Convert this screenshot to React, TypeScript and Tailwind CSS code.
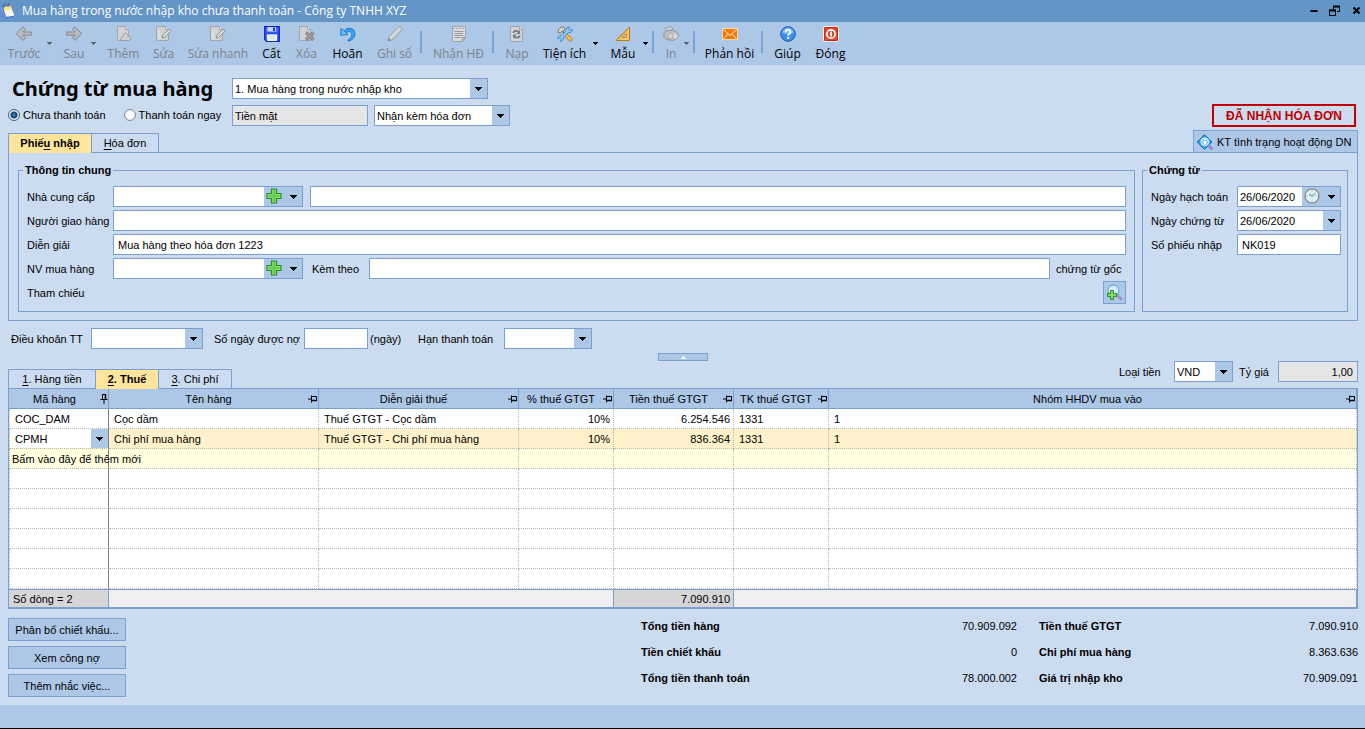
import type { ReactNode } from "react";

const border = "border-[#7a9fd0]";

function Caret({ dim = false }: { dim?: boolean }) {
  return (
    <svg width="7" height="4" viewBox="0 0 7 4" className="shrink-0" aria-hidden="true">
      <path d="M0 0h7v1H6v1H5v1H4v1H3V3H2V2H1V1H0z" fill={dim ? "#555b66" : "#000"} />
    </svg>
  );
}

function SmallCaret({ dim = false }: { dim?: boolean }) {
  return (
    <svg width="5" height="3" viewBox="0 0 5 3" className="shrink-0" aria-hidden="true">
      <path d="M0 0h5v1H4v1H3v1H2V2H1V1H0z" fill={dim ? "#5d636c" : "#000"} />
    </svg>
  );
}

function Svg({ children }: { children: ReactNode }) {
  return (
    <svg width="16" height="16" viewBox="0 0 16 16" className="shrink-0" aria-hidden="true">
      {children}
    </svg>
  );
}

const icons: Record<string, ReactNode> = {
  back: (
    <Svg>
      <path d="M7 .8 9.500 3.200 6.700 6h8.600v3.200H6.700l2.800 2.600L7 14.400.500 7.600z" fill="#b9bbbd" stroke="#85888c" strokeLinejoin="round" />
    </Svg>
  ),
  forward: (
    <Svg>
      <path d="M9 .8 6.500 3.200 9.300 6H.7v3.200h8.600l-2.800 2.600L9 14.400l6.500-6.800z" fill="#b9bbbd" stroke="#85888c" strokeLinejoin="round" />
    </Svg>
  ),
  add: (
    <Svg>
      <path d="M1.500.5h8l3 3v11h-11z" fill="#d0d2d4" stroke="#a3a6aa" />
      <path d="M9.500.5v3h3" fill="#ececec" stroke="#a3a6aa" />
      <path d="M5 13.500c-.5-2 1-3 2.500-3.200C7 8 9 7 10.500 7.600 12 8 12 9.500 11.800 10.200c1.700-.2 3 .8 2.900 2.300-.2 1.500-1.200 2-2.200 2H7c-1 0-1.700-.3-2-1z" fill="#cfcfcf" stroke="#989a9d" />
    </Svg>
  ),
  edit: (
    <Svg>
      <path d="M.5.5h9l3 3v11H.5z" fill="#d0d2d4" stroke="#a3a6aa" />
      <path d="M9.500.5v3h3" fill="#ececec" stroke="#a3a6aa" />
      <path d="M3 4v8M3 12h3" fill="none" stroke="#e9eaeb" />
      <path d="m6 12 .8-2.700 6.400-6.300 2 2-6.500 6.300z" fill="#dcdcdc" stroke="#8b8e93" />
    </Svg>
  ),
  save: (
    <Svg>
      <path d="M.8.8h14.400v14.400H2.500L.8 13.500z" fill="#4d70f3" stroke="#0b2bd8" strokeWidth="1.500" />
      <rect x="3.500" y="1" width="8.500" height="4.500" fill="#c9d6fb" />
      <rect x="9" y="1.500" width="2" height="3.500" fill="#1638df" />
      <path d="M2 7h12" stroke="#1c3fe0" />
      <rect x="3" y="8.500" width="10" height="6.500" fill="#f3f5fb" />
      <path d="M4.500 10.500h7M4.500 12.500h7" stroke="#cdd4e4" />
    </Svg>
  ),
  remove: (
    <Svg>
      <path d="M.5.5h8l3 3v11H.5z" fill="#d0d2d4" stroke="#a3a6aa" />
      <path d="M8.500.5v3h3" fill="#ececec" stroke="#a3a6aa" />
      <path d="m7 6.500 7.500 7.500M14.500 6.500 7 14" stroke="#7e8185" strokeWidth="3.400" />
      <path d="m7.300 6.800 6.900 6.900M14.200 6.800l-6.900 6.900" stroke="#a9abae" strokeWidth="1.200" />
    </Svg>
  ),
  undo: (
    <Svg>
      <path d="M4 5.200C7 .8 14.800 1.500 15 7.500c.1 4-3 6.700-6.500 7.700l-.7-1.200c2.500-1.400 4-3.300 4-5.500 0-3.400-3.300-4-5.300-1.600z" fill="#3ba2f0" stroke="#1b7bd0" strokeLinejoin="round" />
      <path d="M1 2.500.7 9.200 8 8.500 6.200 6.800l-2-2z" fill="#6fc0f8" stroke="#1b7bd0" strokeLinejoin="round" />
    </Svg>
  ),
  pen: (
    <Svg>
      <path d="m1 15 1-4.500L11.500 1c1-.8 2.200-.3 2.800.4.700.7 1 1.800.2 2.700L5.200 13.800z" fill="#cfd0d1" stroke="#9a9da1" />
      <path d="m4 11.500 8-8.200" stroke="#e9e9e9" />
      <path d="m1 15 .8-2.500L3.500 14z" fill="#777" />
    </Svg>
  ),
  invoice: (
    <Svg>
      <path d="M1.500.5h13v11l-3.500 4H1.500z" fill="#dcdddf" stroke="#9da0a5" />
      <path d="M2 2.500h12" stroke="#9da0a5" strokeDasharray="2 1" />
      <path d="M3.500 5.500h9M3.500 7.500h9M3.500 9.500h9M3.500 11.500h6" stroke="#96999e" />
      <path d="M11 15.500v-4h3.500z" fill="#b9bbbe" stroke="#9da0a5" />
    </Svg>
  ),
  reload: (
    <Svg>
      <path d="M1.500.5h9l3 3v12h-12z" fill="#d4d5d7" stroke="#a0a3a8" />
      <path d="M10.500.5v3h3" fill="#f0f0f0" stroke="#a0a3a8" />
      <path d="M4.500 7c0-2.500 4-3 5.300-.8M10.500 9.500c0 2.500-4 3-5.300.8" fill="none" stroke="#777a80" strokeWidth="1.800" />
      <path d="M11 4v4H7.300zM4 12.500v-4h3.700z" fill="#777a80" />
    </Svg>
  ),
  tools: (
    <Svg>
      <path d="m8.500 8.500 5 5.200" stroke="#b9771a" strokeWidth="3.800" strokeLinecap="round" />
      <path d="m8.500 8.500 5 5.200" stroke="#fbc352" strokeWidth="2.200" strokeLinecap="round" />
      <path d="m5 5 4 4" stroke="#77706a" strokeWidth="1.600" />
      <path d="M1 6.300C1 3 3 .8 6.500.8l1.300 1.600-.6 2.200-1.700.3-2 2z" fill="#d8d4cf" stroke="#6f6a66" strokeWidth=".9" />
      <path d="M15.200 3 13 4.700 11.500 3.300 13 1c-2.500-.5-4.300 1.300-3.700 3.700L4.700 9.500C2.500 9 .6 10.500.8 13L3 11.500l1.500 1.400L3 15.200c2.500.3 4-1.500 3.600-3.700l4.700-4.800C13.700 7.200 15.700 5.500 15.200 3z" fill="#8ccbf6" stroke="#3a8cd0" strokeWidth=".9" strokeLinejoin="round" />
    </Svg>
  ),
  ruler: (
    <Svg>
      <path d="M14.500 1v13.500H1z" fill="#f7c765" stroke="#b97a22" strokeLinejoin="round" />
      <path d="M11.300 7.500v4H7.300z" fill="#c9d6e4" stroke="#b97a22" strokeWidth=".9" />
      <path d="m3.500 12.200.8.8M5.500 10.200l.8.800M7.500 8.200l.8.800M9.500 6.200l.8.800M11.500 4.200l.8.800" stroke="#8d5a06" strokeWidth=".8" />
    </Svg>
  ),
  print: (
    <Svg>
      <path d="M2.500 4.500 2 2l5.500-1.500L9.500 2 9 5H4z" fill="#cbcccd" stroke="#9b9ea3" />
      <path d="M.8 7.500 3.500 5l6-.8 5 2.300 1 2.500-1 3-4.500 2.500-6-1L.8 11z" fill="#bfc1c3" stroke="#909398" strokeLinejoin="round" />
      <circle cx="7.500" cy="10" r="2.800" fill="#d4d5d6" stroke="#9a9da1" strokeWidth=".8" />
      <path d="m10 8 4.500 1v2.500l-3 1.800z" fill="#d9dadb" />
    </Svg>
  ),
  mail: (
    <Svg>
      <rect x=".5" y="2.500" width="15" height="11" fill="#f5780a" stroke="#ffd9b0" />
      <path d="m1.500 3.500 6.500 6 6.500-6M1.500 12.800 6 8.200M14.500 12.800 10 8.200" fill="none" stroke="#fff0dd" />
    </Svg>
  ),
  help: (
    <Svg>
      <circle cx="8" cy="8" r="7.300" fill="#3d8ff0" stroke="#155dbd" />
      <path d="M2.500 7a5.500 5.500 0 0 1 11 0c-3 1.800-8 1.800-11 0z" fill="#7db9fa" />
      <path d="M5.700 6.200c0-3 4.800-3 4.800-.2 0 1.700-2.400 1.900-2.400 3.800" fill="none" stroke="#fff" strokeWidth="1.700" />
      <rect x="7.100" y="11" width="2" height="2" fill="#fff" />
    </Svg>
  ),
  close: (
    <Svg>
      <rect x=".5" y=".5" width="15" height="15" rx="1.500" fill="#e2492c" stroke="#fff1ea" />
      <rect x="1.500" y="1.500" width="13" height="13" rx="1" fill="none" stroke="#c03018" />
      <circle cx="8" cy="8" r="4.200" fill="none" stroke="#fff" strokeWidth="1.700" />
      <path d="M8 5.500v5" stroke="#fff" strokeWidth="1.700" />
    </Svg>
  ),
};

type Tool =
  | { kind: "button"; label: string; icon: string; w: string; off?: boolean }
  | { kind: "menu"; label: string; w: string; off?: boolean }
  | { kind: "line" };

const tools: Tool[] = [
  { kind: "button", label: "Trước", icon: "back", w: "w-[46px]", off: true },
  { kind: "menu", label: "Danh sách trước", w: "w-[10px]", off: true },
  { kind: "button", label: "Sau", icon: "forward", w: "w-[34px]", off: true },
  { kind: "menu", label: "Danh sách sau", w: "w-[10px]", off: true },
  { kind: "button", label: "Thêm", icon: "add", w: "w-[45px]", off: true },
  { kind: "button", label: "Sửa", icon: "edit", w: "w-[35px]", off: true },
  { kind: "button", label: "Sửa nhanh", icon: "edit", w: "w-[74px]", off: true },
  { kind: "button", label: "Cất", icon: "save", w: "w-[33px]" },
  { kind: "button", label: "Xóa", icon: "remove", w: "w-[37px]", off: true },
  { kind: "button", label: "Hoãn", icon: "undo", w: "w-[45px]" },
  { kind: "button", label: "Ghi sổ", icon: "pen", w: "w-[49px]", off: true },
  { kind: "line" },
  { kind: "button", label: "Nhận HĐ", icon: "invoice", w: "w-[65px]", off: true },
  { kind: "line" },
  { kind: "button", label: "Nạp", icon: "reload", w: "w-[38px]", off: true },
  { kind: "button", label: "Tiện ích", icon: "tools", w: "w-[57px]" },
  { kind: "menu", label: "Các tiện ích", w: "w-[10px]" },
  { kind: "button", label: "Mẫu", icon: "ruler", w: "w-[40px]" },
  { kind: "menu", label: "Các mẫu", w: "w-[8px]" },
  { kind: "line" },
  { kind: "button", label: "In", icon: "print", w: "w-[26px]", off: true },
  { kind: "menu", label: "Mẫu in", w: "w-[8px]", off: true },
  { kind: "line" },
  { kind: "button", label: "Phản hồi", icon: "mail", w: "w-[61px]" },
  { kind: "line" },
  { kind: "button", label: "Giúp", icon: "help", w: "w-[41px]" },
  { kind: "button", label: "Đóng", icon: "close", w: "w-[45px]" },
];

function Toolbar() {
  return (
    <nav className="flex h-[43px] items-start bg-[#adc7e6] pl-px pt-1 font-['Open_Sans',sans-serif] text-xs">
      {tools.map((t, i) => {
        if (t.kind === "line") {
          return (
            <span key={i} className="mt-[5px] flex h-[22px] w-[7px] shrink-0 pl-px">
              <span className="w-0.5 bg-[#74a3d8]" />
            </span>
          );
        }
        if (t.kind === "menu") {
          return (
            <button key={i} type="button" aria-label={t.label} disabled={t.off} className={`${t.w} mt-4 shrink-0`}>
              <SmallCaret dim={t.off} />
            </button>
          );
        }
        return (
          <button
            key={i}
            type="button"
            disabled={t.off}
            className={`${t.w} flex shrink-0 flex-col items-center gap-1 whitespace-nowrap leading-4 ${t.off ? "text-[#7c828b]" : "text-black"}`}
          >
            {icons[t.icon]}
            <span>{t.label}</span>
          </button>
        );
      })}
    </nav>
  );
}

function Dropdown({ id, value, w, label }: { id: string; value: string; w: string; label?: string }) {
  return (
    <div className={`relative h-[21px] shrink-0 border bg-white ${border} ${w}`}>
      <select id={id} aria-label={label} className="h-full w-full appearance-none bg-transparent pl-0.5 pr-5 outline-none">
        <option>{value}</option>
      </select>
      <span className="pointer-events-none absolute inset-y-0 right-0 flex w-[17px] items-center justify-center bg-[#adc7e6]">
        <Caret />
      </span>
    </div>
  );
}

function PlusIcon() {
  return (
    <svg width="16" height="16" viewBox="0 0 16 16" aria-hidden="true">
      <path d="M5.500 1h5v4.500H15v5h-4.500V15h-5v-4.500H1v-5h4.500z" fill="#8cdb6c" stroke="#259028" strokeWidth="1.200" />
      <path d="M8 2.500v11M2.500 8h11" stroke="#5cc54a" strokeWidth="1.500" />
    </svg>
  );
}

function ClockIcon() {
  return (
    <svg width="16" height="16" viewBox="0 0 16 16" aria-hidden="true">
      <circle cx="8" cy="8" r="7" fill="#d6eef5" stroke="#8d9396" strokeWidth="1.500" />
      <circle cx="8" cy="8" r="5.500" fill="none" stroke="#fff" />
      <path d="m5 6 3 2.300L11.500 5" fill="none" stroke="#5d8390" />
      <path d="M8 2.500v1M8 12.500v1M2.500 8h1M12.500 8h1" stroke="#6c8088" />
    </svg>
  );
}

function ComboBox({ id, value = "", icon, action, grow = "w-[190px]" }: { id: string; value?: string; icon: ReactNode; action: string; grow?: string }) {
  return (
    <div className={`flex h-[21px] shrink-0 border bg-white ${border} ${grow}`}>
      <input id={id} defaultValue={value} className="w-0 min-w-0 flex-1 px-0.5 outline-none" />
      <div className="flex w-[38px] shrink-0 items-center bg-[#adc7e6] pl-0.5">
        <button type="button" aria-label={action} className="w-[18px] pb-0.5">
          {icon}
        </button>
        <button type="button" aria-label={`Mở danh sách ${action}`} className="flex h-full flex-1 items-center justify-center">
          <Caret />
        </button>
      </div>
    </div>
  );
}

function TextBox({ id, value = "", label, className = "" }: { id: string; value?: string; label?: string; className?: string }) {
  return (
    <input
      id={id}
      aria-label={label}
      defaultValue={value}
      className={`h-[21px] min-w-0 border px-1 outline-none ${border} ${className}`}
    />
  );
}

function Radio({ id, label, checked = false }: { id: string; label: string; checked?: boolean }) {
  return (
    <label htmlFor={id} className="flex items-center gap-[3px] whitespace-nowrap">
      <input
        id={id}
        type="radio"
        name="payment"
        defaultChecked={checked}
        className="h-3 w-3 appearance-none rounded-full border border-[#8a9099] bg-[radial-gradient(circle,#ffffff_30%,#d5d9de_100%)] checked:border-[#3f5f80] checked:bg-[radial-gradient(circle,#2c8ccc_0px,#123f68_3px,#e8eef4_4px)]"
      />
      {label}
    </label>
  );
}

function Tab({ k, pre = "", post, w, active = false, last = false }: { k: string; pre?: string; post: string; w: string; active?: boolean; last?: boolean }) {
  return (
    <button
      type="button"
      role="tab"
      aria-selected={active}
      className={`border-l border-t ${border} ${w} ${last ? "border-r" : ""} ${active ? "-mb-px h-5 bg-[#ffe49b] pb-px font-bold" : "h-[19px]"} relative whitespace-nowrap leading-[18px]`}
    >
      {pre}
      <span className="underline underline-offset-2">{k}</span>
      {post}
    </button>
  );
}

function Pin({ up = false }: { up?: boolean }) {
  return up ? (
    <svg width="8" height="10" viewBox="0 0 8 10" className="shrink-0" aria-hidden="true">
      <path d="M2.500 5.500v-5h3v5M.5 5.500h7M4 5.500V10" fill="none" stroke="#000" />
      <path d="M5.500 0v5" stroke="#000" strokeWidth="1.500" />
    </svg>
  ) : (
    <svg width="10" height="8" viewBox="0 0 10 8" className="shrink-0" aria-hidden="true">
      <path d="M3.500.5v7M0 4h3.500M3.500 1.500h5v4h-5" fill="none" stroke="#000" />
      <path d="M4 5.500h5" stroke="#000" strokeWidth="1.500" />
    </svg>
  );
}

const columns = [
  { name: "Mã hàng", w: "w-[100px]" },
  { name: "Tên hàng", w: "w-[210px]" },
  { name: "Diễn giải thuế", w: "w-[200px]" },
  { name: "% thuế GTGT", w: "w-[95px]" },
  { name: "Tiền thuế GTGT", w: "w-[120px]" },
  { name: "TK thuế GTGT", w: "w-[95px]" },
  { name: "Nhóm HHDV mua vào", w: "" },
];

const items = [
  ["COC_DAM", "Cọc dầm", "Thuế GTGT - Cọc dầm", "10%", "6.254.546", "1331", "1"],
  ["CPMH", "Chi phí mua hàng", "Thuế GTGT - Chi phí mua hàng", "10%", "836.364", "1331", "1"],
];

function cellClass(c: number) {
  const edge = c === 0 ? "border-l border-r border-r-[#808080] [border-right-style:solid]" : "border-r";
  const side = c === 3 || c === 4 ? "pr-[3px] text-right" : "pl-[5px] text-left";
  return `h-5 border-b border-dotted border-[#b9b9b9] p-0 whitespace-nowrap ${edge} ${side}`;
}

function TaxTable() {
  return (
    <div className={`border border-b-2 bg-white ${border}`}>
      <table className="w-full table-fixed border-separate border-spacing-0">
        <thead>
          <tr className="bg-[#adc7e6]">
            {columns.map((c, i) => (
              <th key={c.name} scope="col" className={`h-5 border-b border-r p-0 font-normal ${border} ${c.w}`}>
                <div className="flex items-center">
                  <span className="flex-1 whitespace-nowrap text-center">{c.name}</span>
                  <Pin up={i === 0} />
                </div>
              </th>
            ))}
          </tr>
        </thead>
        <tbody>
          <tr>
            {items[0].map((v, c) => (
              <td key={c} className={cellClass(c)}>
                {v}
              </td>
            ))}
          </tr>
          <tr className="bg-[#fff1c9]">
            {items[1].map((v, c) => (
              <td key={c} className={cellClass(c)}>
                {c === 0 ? (
                  <div className="-ml-[5px] flex h-[19px] bg-white pl-[5px]">
                    <input aria-label="Mã hàng" defaultValue={v} className="w-0 flex-1 outline-none" />
                    <button type="button" aria-label="Chọn mã hàng" className="flex w-[17px] items-center justify-center bg-[#adc7e6]">
                      <Caret />
                    </button>
                  </div>
                ) : (
                  v
                )}
              </td>
            ))}
          </tr>
          <tr className="bg-[#ffffdf]">
            {columns.map((_, c) => (
              <td key={c} className={cellClass(c)}>
                {c === 0 ? <div className="-ml-[3px]">Bấm vào đây để thêm mới</div> : null}
              </td>
            ))}
          </tr>
          {[0, 1, 2, 3, 4, 5].map((r) => (
            <tr key={r}>
              {columns.map((_, c) => (
                <td key={c} className={cellClass(c)} />
              ))}
            </tr>
          ))}
        </tbody>
        <tfoot>
          <tr className="bg-[#efefef]">
            <td className={`h-[18px] border-r border-t bg-[#d6d6d6] p-0 pl-1 ${border}`}>Số dòng = 2</td>
            <td colSpan={3} className={`border-r border-t p-0 ${border}`} />
            <td className={`border-r border-t bg-[#d6d6d6] p-0 pr-[3px] text-right ${border}`}>7.090.910</td>
            <td colSpan={2} className={`border-r border-t p-0 ${border}`} />
          </tr>
        </tfoot>
      </table>
    </div>
  );
}

function Totals({ rows, w }: { rows: [string, string][]; w: string }) {
  return (
    <dl className={w}>
      {rows.map(([k, v]) => (
        <div key={k} className="flex justify-between leading-[26px]">
          <dt className="font-bold">{k}</dt>
          <dd>{v}</dd>
        </div>
      ))}
    </dl>
  );
}

export default function App() {
  return (
    <div className="flex min-h-screen flex-col bg-[#cbdbf0] font-['Liberation_Sans',Arial,sans-serif] text-[11px] leading-4 text-black">
      <header className="flex h-[22px] items-center bg-[#6495c7] pl-px pr-1">
        <svg width="14" height="16" viewBox="0 0 14 16" className="mr-[7px] shrink-0" aria-hidden="true">
          <path d="M.3 3.500 8.500 2.500 13.500 13 5 15.500C2.500 14.500 1 12 .7 9z" fill="#3a63cf" />
          <path d="M.5 4c.3 4 1.500 8 4.700 10.800" fill="none" stroke="#7f9df0" strokeWidth="1.500" />
          <path d="m2.500 4 7-1 4 9.500-7.500 1.500C3.800 11.500 2.800 8 2.500 4z" fill="#fdf9e4" />
          <path d="m2.500 4 7-1 1.500 3.500-7.800 1.300z" fill="#fbe37a" />
          <path d="M3 4.500V1.500c.2-1 1.300-1 1.500 0M7 4V1c.2-1 1.300-1 1.500 0" fill="none" stroke="#4d5a6e" strokeWidth=".9" />
        </svg>
        <h2 className="flex-1 font-['Open_Sans',sans-serif] text-xs text-white">
          Mua hàng trong nước nhập kho chưa thanh toán - Công ty TNHH XYZ
        </h2>
        <div className="flex items-center gap-[11px]">
          <button type="button" aria-label="Thu nhỏ">
            <svg width="8" height="12" viewBox="0 0 8 12">
              <path d="M.5 6h7" stroke="#000" strokeWidth="2" />
            </svg>
          </button>
          <button type="button" aria-label="Khôi phục">
            <svg width="12" height="12" viewBox="0 0 12 12">
              <path d="M4.500 4V1.500h6v5H8" fill="none" stroke="#000" />
              <path d="M4 1.500h7" stroke="#000" strokeWidth="2" />
              <path d="M.5 5h6v5.500h-6z" fill="none" stroke="#000" />
              <path d="M0 5.500h7" stroke="#000" strokeWidth="2" />
            </svg>
          </button>
          <button type="button" aria-label="Đóng cửa sổ">
            <svg width="9" height="12" viewBox="0 0 9 12">
              <path d="m1.500 2.500 6 6M7.500 2.500l-6 6" stroke="#000" strokeWidth="2" />
            </svg>
          </button>
        </div>
      </header>

      <Toolbar />

      <main className="flex-1 pb-[7px] pl-2 pr-[7px] pt-[13px]">
        <div className="flex h-[21px] items-center">
          <h1 className="w-[224px] whitespace-nowrap pl-1 font-['Noto_Sans',sans-serif] text-xl font-bold">Chứng từ mua hàng</h1>
          <Dropdown id="kind" label="Loại chứng từ" value="1. Mua hàng trong nước nhập kho" w="w-[256px]" />
        </div>

        <div className="mt-1.5 flex h-[21px] items-center">
          <div className="flex w-[224px] gap-[18px] pb-px">
            <Radio id="unpaid" label="Chưa thanh toán" checked />
            <Radio id="paid" label="Thanh toán ngay" />
          </div>
          <input
            aria-label="Hình thức thanh toán"
            defaultValue="Tiền mặt"
            readOnly
            className={`mr-1.5 h-[21px] w-[136px] border bg-[#e5e5e5] px-0.5 outline-none ${border}`}
          />
          <Dropdown id="invoice" label="Hóa đơn kèm theo" value="Nhận kèm hóa đơn" w="w-[136px]" />
          <strong className="ml-auto mr-0.5 h-[23px] w-[144px] shrink-0 border-2 border-[#c00000] text-center text-xs leading-5 text-[#c00000]">
            ĐÃ NHẬN HÓA ĐƠN
          </strong>
        </div>

        <div className="mt-1 flex h-[22px] items-end" role="tablist">
          <Tab pre="Phiế" k="u" post=" nhập" w="w-[83px]" active />
          <Tab k="H" post="óa đơn" w="w-[68px]" last />
          <button type="button" className={`ml-auto flex h-[22px] w-[165px] items-center gap-1 whitespace-nowrap border border-b-0 bg-[#adc7e6] pl-[3px] ${border}`}>
            <svg width="16" height="16" viewBox="0 0 16 16" aria-hidden="true">
              <path d="M7.500.5 15 8l-7.500 7.500L0 8z" fill="#2e9be6" stroke="#1577c2" strokeLinejoin="round" />
              <circle cx="7.800" cy="7.800" r="4" fill="#8fd2fb" stroke="#d9f1ff" />
              <path d="M8 7v3.500M8 4.500v1.500" stroke="#fff" strokeWidth="1.800" fill="none" />
              <path d="m12 12 2.500 2.500" stroke="#9787cf" strokeWidth="3" strokeLinecap="round" />
            </svg>
            KT tình trạng hoạt động DN
          </button>
        </div>

        <section className={`flex gap-[7px] border px-[9px] pb-2 pt-[9px] ${border}`}>
          <fieldset className={`min-w-0 flex-1 border ${border}`}>
            <legend className="ml-1 px-0.5 font-bold">Thông tin chung</legend>
            <div className="flex flex-col gap-[3px] px-2 py-2">
              <div className="flex h-[21px] items-center">
                <label htmlFor="supplier" className="w-[86px] shrink-0">Nhà cung cấp</label>
                <ComboBox id="supplier" icon={<PlusIcon />} action="Thêm nhà cung cấp" />
                <TextBox id="supplierName" label="Tên nhà cung cấp" className="ml-[7px] flex-1 bg-white" />
              </div>
              <div className="flex h-[21px] items-center">
                <label htmlFor="carrier" className="w-[86px] shrink-0 whitespace-nowrap">Người giao hàng</label>
                <TextBox id="carrier" className="flex-1 bg-white" />
              </div>
              <div className="flex h-[21px] items-center">
                <label htmlFor="note" className="w-[86px] shrink-0">Diễn giải</label>
                <TextBox id="note" value="Mua hàng theo hóa đơn 1223" className="flex-1 bg-white" />
              </div>
              <div className="flex h-[21px] items-center">
                <label htmlFor="buyer" className="w-[86px] shrink-0">NV mua hàng</label>
                <ComboBox id="buyer" icon={<PlusIcon />} action="Thêm nhân viên" />
                <label htmlFor="attached" className="w-[66px] shrink-0 pl-[9px]">Kèm theo</label>
                <TextBox id="attached" className="flex-1 bg-white" />
                <span className="w-[76px] shrink-0 pl-1.5">chứng từ gốc</span>
              </div>
              <div className="flex h-[21px] items-center justify-between">
                <span>Tham chiếu</span>
                <button type="button" aria-label="Chọn tham chiếu" className={`flex h-[23px] w-[23px] items-center justify-center border bg-[#adc7e6] ${border}`}>
                  <svg width="17" height="17" viewBox="0 0 17 17" aria-hidden="true">
                    <path d="m11 11 4 4" stroke="#9d8fd2" strokeWidth="3" strokeLinecap="round" />
                    <circle cx="7.500" cy="6.500" r="5.500" fill="#d4ecfb" stroke="#6db1dd" strokeWidth="1.300" />
                    <path d="M4.500 6.500h3v3h3v3h-3v3h-3v-3h-3v-3h3z" fill="#86d860" stroke="#259028" />
                  </svg>
                </button>
              </div>
            </div>
          </fieldset>

          <fieldset className={`w-[206px] shrink-0 border ${border}`}>
            <legend className="ml-1 px-0.5 font-bold">Chứng từ</legend>
            <div className="flex flex-col gap-[3px] py-2 pl-2 pr-1.5">
              <div className="flex items-center">
                <label htmlFor="posted" className="w-[86px] shrink-0">Ngày hạch toán</label>
                <ComboBox id="posted" value="26/06/2020" icon={<ClockIcon />} action="Chọn giờ" grow="flex-1" />
              </div>
              <div className="flex items-center">
                <label htmlFor="dated" className="w-[86px] shrink-0">Ngày chứng từ</label>
                <Dropdown id="dated" value="26/06/2020" w="flex-1" />
              </div>
              <div className="flex items-center">
                <label htmlFor="number" className="w-[86px] shrink-0">Số phiếu nhập</label>
                <TextBox id="number" value="NK019" className="w-0 flex-1 bg-white" />
              </div>
            </div>
          </fieldset>
        </section>

        <div className="mt-[7px] flex h-[21px] items-center whitespace-nowrap">
          <label htmlFor="terms" className="w-[83px] pl-[3px]">Điều khoản TT</label>
          <Dropdown id="terms" value="" w="w-[112px]" />
          <label htmlFor="days" className="w-[101px] pl-[11px]">Số ngày được nợ</label>
          <TextBox id="days" className="w-16 bg-white" />
          <span className="w-[50px] pl-0.5">(ngày)</span>
          <label htmlFor="due" className="w-[86px]">Hạn thanh toán</label>
          <Dropdown id="due" value="" w="w-[88px]" />
        </div>

        <button type="button" aria-label="Thu gọn" className={`mx-auto mt-1 flex h-2 w-[50px] items-center justify-center border bg-[#adc7e6] ${border}`}>
          <svg width="5" height="3" viewBox="0 0 5 3">
            <path d="M2 0h1v1h1v1h1v1H0V2h1V1h1z" fill="#fff" />
          </svg>
        </button>

        <div className="flex h-[27px] items-end">
          <div className="flex items-end" role="tablist">
            <Tab k="1" post=". Hàng tiền" w="w-[87px]" />
            <Tab k="2" post=". Thuế" w="w-[63px]" active />
            <Tab k="3" post=". Chi phí" w="w-[74px]" last />
          </div>
          <div className="ml-auto flex items-center self-start">
            <label htmlFor="currency" className="w-[55px]">Loại tiền</label>
            <Dropdown id="currency" value="VND" w="w-[59px]" />
            <label htmlFor="rate" className="w-[45px] pl-1.5">Tỷ giá</label>
            <TextBox id="rate" value="1,00" className="w-20 bg-[#e5e5e5] text-right" />
          </div>
        </div>

        <TaxTable />

        <div className="flex justify-between">
          <div className="flex w-[118px] flex-col gap-[5px] pt-[9px]">
            {["Phân bổ chiết khấu...", "Xem công nợ", "Thêm nhắc việc..."].map((t) => (
              <button key={t} type="button" className={`h-[23px] whitespace-nowrap border bg-[#adc7e6] ${border}`}>
                {t}
              </button>
            ))}
          </div>
          <div className="flex gap-[22px] pt-1">
            <Totals
              w="w-[376px]"
              rows={[
                ["Tổng tiền hàng", "70.909.092"],
                ["Tiền chiết khấu", "0"],
                ["Tổng tiền thanh toán", "78.000.002"],
              ]}
            />
            <Totals
              w="w-[319px]"
              rows={[
                ["Tiền thuế GTGT", "7.090.910"],
                ["Chi phí mua hàng", "8.363.636"],
                ["Giá trị nhập kho", "70.909.091"],
              ]}
            />
          </div>
        </div>
      </main>

      <footer className="h-6 border-b border-black bg-[#adc7e6]" />
    </div>
  );
}
